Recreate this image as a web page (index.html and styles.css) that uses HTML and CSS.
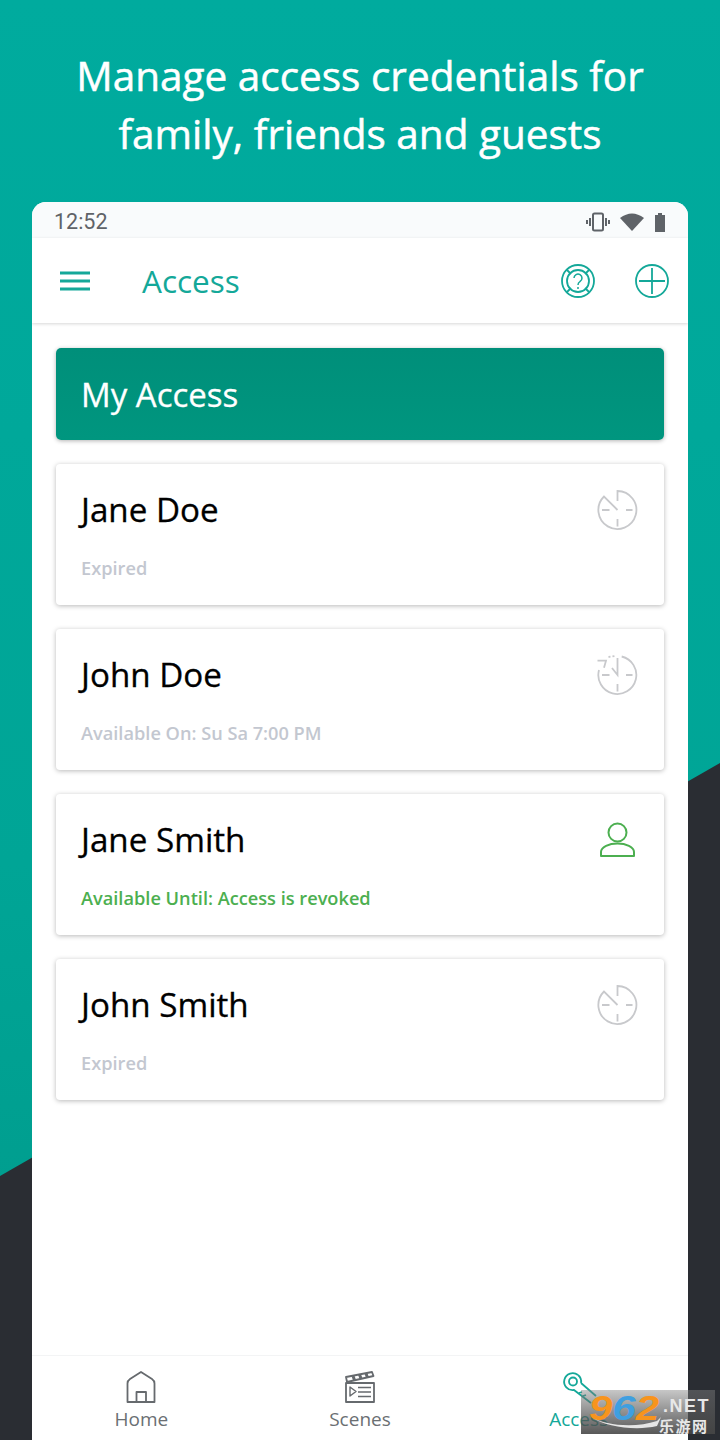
FILE: index.html
```html
<!DOCTYPE html>
<html lang="en">

<head>
    <meta charset="UTF-8">
    <meta name="viewport" content="width=device-width, initial-scale=1.0">
    <title>Access</title>
    <link rel="stylesheet" href="styles.css">
</head>

<body>
    <div class="stage">
        <h1 class="headline">Manage access credentials for<br>family, friends and guests</h1>

        <div class="phone">
            <div class="status-bar">
                <span class="clock">12:52</span>
                <div class="status-icons">
                    <svg width="24" height="20" viewBox="0 0 24 20" fill="none" stroke="#5f6368">
                        <rect x="7" y="1.500" width="10" height="17" rx="1.500" stroke-width="2"/>
                        <path d="M4 6v8M1 8v4M20 6v8M23 8v4" stroke-width="2"/>
                    </svg>
                    <svg width="24" height="18" viewBox="0 0 24 18"><path d="M0 5Q12-4 24 5L12 18Z" fill="#5f6368"/></svg>
                    <svg width="12" height="20" viewBox="0 0 12 20"><path d="M1 3h3V1h4v2h3v17H1Z" fill="#5f6368"/></svg>
                </div>
            </div>

            <header class="app-bar">
                <svg class="menu-icon" width="30" height="20" viewBox="0 0 30 20" fill="none" stroke="#14a899" stroke-width="3">
                    <path d="M0 2h30M0 10h30M0 18h30"/>
                </svg>
                <span class="app-title">Access</span>
                <svg class="help-icon" width="36" height="36" viewBox="0 0 36 36" fill="none" stroke="#14a899" stroke-width="1.800">
                    <circle cx="18" cy="18" r="16"/>
                    <circle cx="18" cy="18" r="11"/>
                    <path d="M7 7l4 4M29 7l-4 4M7 29l4-4M29 29l-4-4"/>
                    <path d="M14 15a4 4 0 1 1 6 3.500c-1.500 1-2 1.500-2 3.500M18 24v2" stroke-width="1.500"/>
                </svg>
                <svg class="add-icon" width="36" height="36" viewBox="0 0 36 36" fill="none" stroke="#14a899" stroke-width="1.800">
                    <circle cx="18" cy="18" r="16"/>
                    <path d="M18 5v26M5 18h26"/>
                </svg>
            </header>

            <main class="content">
                <div class="banner">My Access</div>

                <div class="card">
                    <div class="card-top">
                        <span class="name">Jane Doe</span>
                        <svg width="42" height="42" viewBox="0 0 42 42" fill="none" stroke="#c8c9cc" stroke-width="1.800">
                            <path d="M20.500 12V2A19 19 0 1 1 7 7.500L20.500 21"/>
                            <path d="M5 21h7.500M29 21h6.500M20.500 30v7.500"/>
                        </svg>
                    </div>
                    <div class="note">Expired</div>
                </div>

                <div class="card">
                    <div class="card-top">
                        <span class="name">John Doe</span>
                        <svg width="42" height="42" viewBox="0 0 42 42" fill="none" stroke="#c8c9cc" stroke-width="1.800">
                            <path d="M24.700 2.500A19 19 0 1 1 2 16"/>
                            <path d="M0.500 6.700H9L7 13.700"/>
                            <path d="M11.500 3L18 2" stroke-dasharray="2 2"/>
                            <path d="M20.500 4V21L15 14M5 21h7.500M29 21h6.500M20.500 30v7.500"/>
                        </svg>
                    </div>
                    <div class="note">Available On: Su Sa 7:00 PM</div>
                </div>

                <div class="card">
                    <div class="card-top">
                        <span class="name">Jane Smith</span>
                        <svg width="42" height="42" viewBox="0 0 42 42" fill="none" stroke="#4caf50" stroke-width="2">
                            <circle cx="20.500" cy="13.500" r="9"/>
                            <path d="M4 37v-4c0-5 8-8.500 16.500-8.500S37 28 37 33v4Z" stroke-linejoin="round"/>
                        </svg>
                    </div>
                    <div class="note note-active">Available Until: Access is revoked</div>
                </div>

                <div class="card">
                    <div class="card-top">
                        <span class="name">John Smith</span>
                        <svg width="42" height="42" viewBox="0 0 42 42" fill="none" stroke="#c8c9cc" stroke-width="1.800">
                            <path d="M20.500 12V2A19 19 0 1 1 7 7.500L20.500 21"/>
                            <path d="M5 21h7.500M29 21h6.500M20.500 30v7.500"/>
                        </svg>
                    </div>
                    <div class="note">Expired</div>
                </div>
            </main>

            <nav class="bottom-nav">
                <div class="nav-item">
                    <svg width="32" height="32" viewBox="0 0 32 32" fill="none" stroke="#666a6e" stroke-width="1.800" stroke-linejoin="round">
                        <path d="M2.500 31V12.500C2.500 10 3.500 9 5 8L16 1l11 7c1.500 1 2.500 2 2.500 4.500V31Z"/>
                        <path d="M11.500 31V21h9.500v10"/>
                    </svg>
                    <span>Home</span>
                </div>
                <div class="nav-item">
                    <svg width="32" height="32" viewBox="0 0 32 32" fill="none" stroke="#666a6e" stroke-width="1.800" stroke-linejoin="round">
                        <path d="M2 12h28v19H2Z"/>
                        <path d="M2 6l26-5 1.500 4L3 11Z"/>
                        <path d="M9 5l1.500 4M15.500 3.500L17 7.500M22 2.500l1.500 4" stroke-width="3"/>
                        <path d="M6 16l6 4.500-6 4.500ZM14 16.500h13M14 21h13M14 25.500h13" stroke-width="1.400"/>
                    </svg>
                    <span>Scenes</span>
                </div>
                <div class="nav-item nav-active">
                    <svg class="key-icon" width="32" height="32" viewBox="0 0 32 32" fill="none" stroke="#14a899" stroke-width="1.800">
                        <path d="M15 4A8.500 8.500 0 1 0 11 19L28 32M18 12L33 25"/>
                        <path d="M15 4A8.500 8.500 0 0 1 18 12"/>
                        <circle cx="10" cy="10.500" r="4"/>
                        <path d="M16 22l3-1M20 25l3-1"/>
                    </svg>
                    <span>Access</span>
                </div>
            </nav>
        </div>

        <div class="watermark">
            <span class="wm-num">9<span class="wm-blue">6</span>2</span>
            <span class="wm-net">.NET</span>
            <svg class="wm-swoosh" width="70" height="12" viewBox="0 0 70 12">
                <path d="M0 0C15 9 45 11 66 4L70 0 66 9C45 14 15 10 0 0Z" fill="#e6e6e6"/>
            </svg>
            <span class="wm-cn">乐游网</span>
        </div>
    </div>
</body>

</html>
```

FILE: styles.css
```css
* {
    box-sizing: border-box;
}

body {
    margin: 0;
    font-family: "Open Sans", "Noto Sans", sans-serif;
}

/* Teal backdrop with the dark wedge along the bottom */
.stage {
    position: relative;
    width: 720px;
    height: 1440px;
    overflow: hidden;
    background: linear-gradient(180deg, #00ab9e 0%, #00a596 60%, #00998a 100%);
}

.stage::before {
    content: "";
    position: absolute;
    inset: 0;
    background: #2a2d33;
    clip-path: polygon(0 1176px, 720px 763px, 720px 1440px, 0 1440px);
}

.headline {
    position: relative;
    height: 202px;
    margin: 0;
    padding-top: 47px;
    font-size: 40.500px;
    line-height: 58px;
    font-weight: 400;
    -webkit-text-stroke: 0.5px #fff;
    text-align: center;
    color: #fff;
}

.phone {
    position: relative;
    display: flex;
    flex-direction: column;
    height: 1238px;
    margin: 0 32px;
    border-radius: 14px 14px 0 0;
    background: #fff;
    overflow: hidden;
}

.status-bar {
    display: flex;
    justify-content: space-between;
    align-items: center;
    height: 36px;
    padding: 3px 22px 0;
    background: #f9fbfc;
}

.clock {
    font-family: Roboto, sans-serif;
    font-size: 21.500px;
    color: #5f6368;
}

.status-icons {
    display: flex;
    align-items: center;
    gap: 10px;
}

.app-bar {
    display: flex;
    align-items: center;
    height: 85px;
    padding: 0 18px 0 28px;
    background: #fff;
    box-shadow: 0 1px 3px rgba(0, 0, 0, 0.16);
}

.app-title {
    flex: 1;
    margin-left: 52px;
    font-size: 31.500px;
    color: #14a899;
}

.add-icon {
    margin-left: 38px;
}

.content {
    flex: 1;
    display: flex;
    flex-direction: column;
    gap: 24px;
    padding: 25px 24px 0;
}

.banner {
    display: flex;
    align-items: center;
    height: 92px;
    padding-left: 25px;
    border-radius: 5px;
    font-size: 33px;
    -webkit-text-stroke: 0.3px #fff;
    color: #fff;
    background: linear-gradient(180deg, #008f7a, #00967f);
    box-shadow: 0 1px 4px rgba(0, 0, 0, 0.3);
}

.card {
    display: flex;
    flex-direction: column;
    justify-content: space-between;
    height: 141px;
    padding: 24px 25px 24px;
    border-radius: 4px;
    background: #fff;
    box-shadow: 0 1px 5px rgba(0, 0, 0, 0.28);
}

.card-top {
    display: flex;
    justify-content: space-between;
    align-items: flex-start;
}

.name {
    margin-top: -1px;
    font-size: 33.200px;
    line-height: 46px;
    -webkit-text-stroke: 0.3px #000;
    color: #000;
}

.card-top svg {
    margin-top: 1px;
}

.note {
    font-size: 18.200px;
    line-height: 26px;
    font-weight: 600;
    color: #c3c7d0;
}

.note-active {
    color: #4caf50;
}

.bottom-nav {
    display: flex;
    justify-content: space-around;
    height: 85px;
    padding-top: 15px;
    border-top: 1px solid #f3f4f5;
}

.nav-item {
    display: flex;
    flex-direction: column;
    align-items: center;
    gap: 3px;
    width: 120px;
    font-size: 19px;
    line-height: 26px;
    color: #6b6f73;
}

.nav-active {
    color: #14a899;
}

.key-icon {
    overflow: visible;
}

/* Site stamp sitting over the corner of the screenshot */
.watermark {
    position: absolute;
    left: 581px;
    top: 1390px;
    width: 134px;
    height: 44px;
    background: linear-gradient(180deg, rgba(130, 130, 130, 0.45), rgba(70, 70, 70, 0.9));
    line-height: 1;
    font-family: "Liberation Sans", sans-serif;
    font-weight: 700;
}

.wm-num {
    position: absolute;
    left: 8px;
    top: 0;
    font-size: 35px;
    font-style: italic;
    color: #f7941d;
    transform: scaleX(1.2);
    transform-origin: left top;
}

.wm-blue {
    color: #3f9fe0;
}

.wm-net {
    position: absolute;
    left: 82px;
    top: 7px;
    font-size: 18px;
    letter-spacing: 1.500px;
    color: #e8e8e8;
}

.wm-swoosh {
    position: absolute;
    left: 10px;
    top: 27px;
}

.wm-cn {
    position: absolute;
    left: 78px;
    top: 28px;
    font-family: "Noto Sans CJK SC", sans-serif;
    font-size: 15px;
    letter-spacing: 1.500px;
    color: #e8e8e8;
}
```
